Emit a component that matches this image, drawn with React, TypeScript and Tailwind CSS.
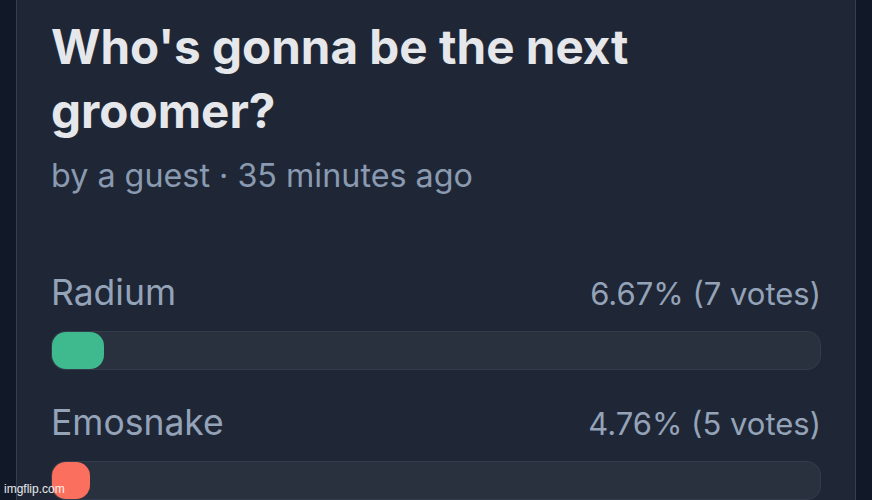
import React from "react";

const options = [
  { name: "Radium", pct: "6.67%", votes: 7, fill: "w-[52px]", color: "bg-[#3fba8f]" },
  { name: "Emosnake", pct: "4.76%", votes: 5, fill: "w-[38px]", color: "bg-[#fa6f5d]" },
];

const App: React.FC = () => {
  return (
    <div className="relative h-[500px] w-[872px] overflow-hidden bg-[#111827] px-4 font-['Inter',sans-serif]">
      <div className="h-full border-x border-[#353e4d] bg-[#1f2737] px-[34px] pt-[15px]">
        {/* Title */}
        <h1 className="text-[47.6px] font-bold leading-[64px] text-[#e5e7eb]">
          Who's gonna be the next
          <br />
          groomer?
        </h1>
        <p className="mt-[13px] text-[32.3px] leading-[40px] text-[#8a9ab0]">
          by a guest · 35 minutes ago
        </p>

        {/* Options */}
        <div className="mt-[77px] flex flex-col gap-[33px]">
          {options.map((o) => (
            <div key={o.name}>
              <div className="flex items-baseline justify-between text-[35.5px] leading-[40px] text-[#94a3b8]">
                <span>{o.name}</span>
                <span className="text-[31px]">
                  {o.pct} ({o.votes} votes)
                </span>
              </div>
              <div className="mt-[17px] h-[39px] rounded-[14px] border border-[#333c4a] bg-[#2a313e]">
                <div className={`h-full rounded-[14px] ${o.fill} ${o.color}`} />
              </div>
            </div>
          ))}
        </div>
      </div>

      <span className="absolute bottom-[2px] left-[4px] font-['Liberation_Sans',sans-serif] text-[12px] text-white/90">
        imgflip.com
      </span>
    </div>
  );
};

export default App;
